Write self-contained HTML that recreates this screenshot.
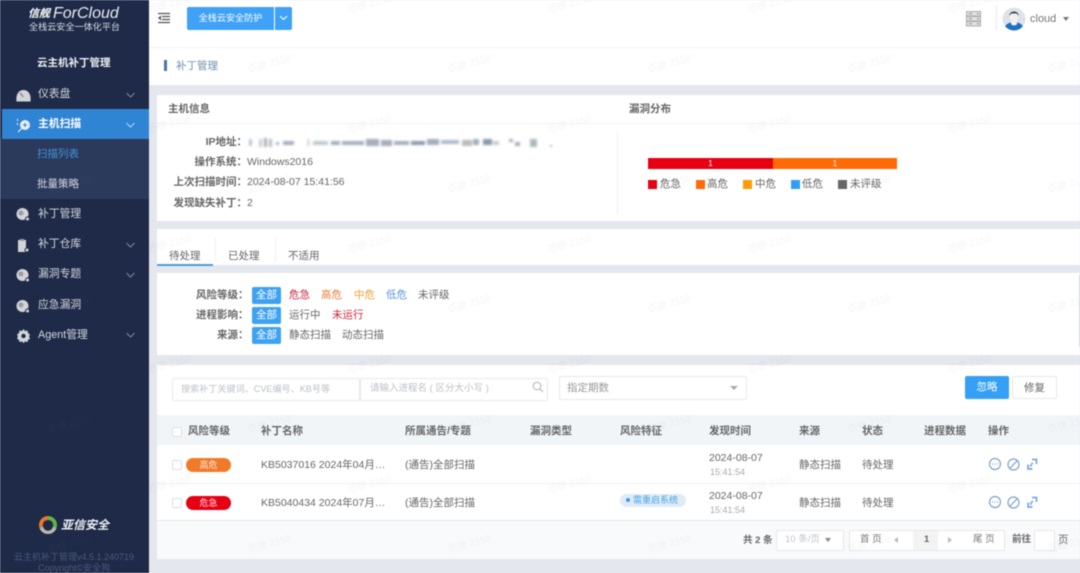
<!DOCTYPE html>
<html lang="zh"><head><meta charset="utf-8"><title>补丁管理</title>
<style>
html,body{margin:0;padding:0;width:1080px;height:573px;overflow:hidden;background:#e4e7ee}
#r{position:relative;width:1080px;height:573px;overflow:hidden;filter:blur(.45px);font-family:"Liberation Sans","Noto Sans CJK SC",sans-serif;font-size:10.5px;color:#666}
#r div,#r span,#r svg{position:absolute}
.t{line-height:14px;white-space:nowrap;margin-top:1px}
.b{font-weight:700;color:#666}
.w{background:#fff}
.m{color:#d5d9e2;font-size:10.8px;left:38px}
.r{text-align:right;width:76px;left:171px;color:#666;font-weight:700}
.th{color:#666;font-weight:700;top:423px}
.box{background:#fff;border:1px solid #e6e8ec;border-radius:2px;box-sizing:border-box}
.ph{color:#bcc0c8;font-size:9.5px}
.chip{background:#3ea2f2;color:#fff;left:252px;width:29px;height:17px;border-radius:2px;text-align:center;line-height:17px}
.cb{width:10px;height:10px;left:172px;background:#fff;border:1px solid #dcdfe6;border-radius:2px;box-sizing:border-box}
</style></head><body><div id="r">

<!-- top -->
<div class="w" style="left:149px;top:0;width:931px;height:47px"></div>
<div class="w" style="left:149px;top:48px;width:931px;height:37px"></div>
<div style="left:149px;top:47px;width:931px;height:1px;background:#f1f2f5"></div>
<svg style="left:157px;top:12px" width="14" height="12" viewBox="0 0 14 12"><path d="M1 1.500H13M5 4.500H13M5 7.500H13M1 10.500H13" stroke="#555" stroke-width="1.300" fill="none"/><path d="M4 3.500L1 6l3 2.500z" fill="#555"/></svg>
<div style="left:187px;top:7px;width:87px;height:23px;background:#3fa2f7;border-radius:2px 0 0 2px;color:#fff;text-align:center;line-height:23px;font-size:9.1px">全栈云安全防护</div>
<div style="left:275px;top:7px;width:17px;height:23px;background:#3fa2f7;border-radius:0 2px 2px 0"></div>
<svg style="left:279px;top:15px" width="9" height="6" viewBox="0 0 9 6"><path d="M1 1l3.500 3.500L8 1" stroke="#fff" fill="none"/></svg>
<svg style="left:966px;top:11px" width="15" height="16" viewBox="0 0 15 16"><path d="M.5.500h14v4.500H.5zM.5 5.500h14V10H.5zM.5 10.500h14V15H.5z" fill="#e3e3e3" stroke="#aaa"/><path d="M3 2.700h3M3 7.700h3M3 12.700h3M11 2.700h2M11 7.700h2M11 12.700h2" stroke="#888"/></svg>
<div style="left:996px;top:6px;width:1px;height:24px;background:#e8e8e8"></div>
<svg style="left:1002px;top:7px" width="24" height="24" viewBox="0 0 24 24"><defs><clipPath id="c"><circle cx="12" cy="12" r="11.500"/></clipPath></defs><circle cx="12" cy="12" r="11.500" fill="#dfe2e8"/><g clip-path="url(#c)"><path d="M2 24c0-6 4-8 7-8.500h6c3 .5 7 2.500 7 8.500z" fill="#1f70c4"/><path d="M9 13h6v4c-1 2-5 2-6 0z" fill="#f4f1ee"/><ellipse cx="12" cy="10" rx="4.200" ry="5.500" fill="#f4f0ec"/><path d="M7.500 9C7 3 17 3 16.500 9 15.500 6.500 14 6 12 6.500 10 6 8.500 6.500 7.500 9z" fill="#3a4250"/></g></svg>
<span class="t" style="left:1030px;top:11px;color:#777;font-size:11px">cloud</span>
<div style="left:1063px;top:17px;width:0;height:0;border:3px solid transparent;border-top:4px solid #777"></div>
<div style="left:164px;top:60px;width:3px;height:11px;background:#4a72a8"></div>
<span class="t" style="left:176px;top:58px;color:#6f8fae">补丁管理</span>

<!-- host card -->
<div class="w" style="left:157px;top:95px;width:923px;height:126px"></div>
<div style="left:157px;top:123px;width:923px;height:1px;background:#f3f4f6"></div>
<span class="t b" style="left:168px;top:101px">主机信息</span>
<span class="t b" style="left:629px;top:101px">漏洞分布</span>
<span class="t r" style="top:134px">IP地址：</span>
<span class="t r" style="top:154px">操作系统：</span>
<span class="t r" style="top:174px">上次扫描时间：</span>
<span class="t r" style="top:195px">发现缺失补丁：</span>
<svg style="left:247px;top:136px;filter:blur(1.1px)" width="315" height="14"><g fill="#a4aebd"><rect x="2" y="3" width="3" height="7" fill="#b9c4d8"/><rect x="12" y="3" width="3" height="8" fill="#ccc"/><rect x="17" y="2" width="3" height="9"/><rect x="22" y="3" width="3" height="8" fill="#bbb"/><rect x="29" y="6" width="3" height="3"/><rect x="36" y="5" width="11" height="4"/><rect x="60" y="3" width="3" height="7" fill="#ddd"/><rect x="66" y="5" width="15" height="4" fill="#bcc"/><rect x="84" y="5" width="9" height="4"/><rect x="95" y="5" width="22" height="4"/><rect x="119" y="3" width="13" height="7"/><rect x="134" y="4" width="11" height="6" fill="#aab"/><rect x="147" y="5" width="15" height="4"/><rect x="164" y="5" width="14" height="4" fill="#89a"/><rect x="180" y="3" width="12" height="6"/><rect x="194" y="4" width="18" height="4" fill="#abc"/><rect x="215" y="4" width="10" height="6" fill="#bbb"/><rect x="226" y="3" width="6" height="6"/><rect x="236" y="3" width="9" height="6" fill="#89a"/><rect x="246" y="5" width="6" height="4" fill="#ccc"/><rect x="262" y="3" width="4" height="3"/><rect x="268" y="6" width="5" height="4"/><rect x="283" y="3" width="7" height="8" fill="#abb"/><rect x="303" y="9" width="2" height="2"/></g></svg>
<span class="t" style="left:247px;top:154px">Windows2016</span>
<span class="t" style="left:247px;top:174px">2024-08-07 15:41:56</span>
<span class="t" style="left:247px;top:195px">2</span>
<div style="left:617px;top:132px;width:1px;height:82px;background:#f0f0f2"></div>
<div style="left:648px;top:158px;width:125px;height:11px;background:#e60012;color:#fff;text-align:center;line-height:11px;font-size:8px">1</div>
<div style="left:773px;top:158px;width:124px;height:11px;background:#ff6a06;color:#fff;text-align:center;line-height:11px;font-size:8px">1</div>
<div style="left:648px;top:180px;width:9px;height:9px;background:#e60012"></div><span class="t" style="left:660px;top:176px">危急</span>
<div style="left:696px;top:180px;width:9px;height:9px;background:#ff6a06"></div><span class="t" style="left:707px;top:176px">高危</span>
<div style="left:743px;top:180px;width:9px;height:9px;background:#ff9c07"></div><span class="t" style="left:755px;top:176px">中危</span>
<div style="left:791px;top:180px;width:9px;height:9px;background:#2f9ff5"></div><span class="t" style="left:802px;top:176px">低危</span>
<div style="left:838px;top:180px;width:9px;height:9px;background:#666"></div><span class="t" style="left:850px;top:176px">未评级</span>

<!-- tabs -->
<div class="w" style="left:157px;top:229px;width:923px;height:36px"></div>
<div style="left:157px;top:264px;width:56px;height:2px;background:#4a9fd8"></div>
<div style="left:215px;top:238px;width:1px;height:24px;background:#f0f0f2"></div>
<div style="left:275px;top:238px;width:1px;height:24px;background:#f0f0f2"></div>
<span class="t" style="left:169px;top:248px">待处理</span>
<span class="t" style="left:228px;top:248px">已处理</span>
<span class="t" style="left:288px;top:248px">不适用</span>

<!-- filters -->
<div class="w" style="left:157px;top:273px;width:923px;height:82px"></div>
<div style="left:1079px;top:275px;width:1px;height:72px;background:#d8dbe2"></div>
<span class="t b" style="left:196px;top:287px">风险等级：</span>
<span class="t b" style="left:196px;top:307px">进程影响：</span>
<span class="t b" style="left:217px;top:327px">来源：</span>
<div class="chip" style="top:287px">全部</div><div class="chip" style="top:307px">全部</div><div class="chip" style="top:327px">全部</div>
<span class="t" style="left:289px;top:287px;color:#c8243c">危急</span>
<span class="t" style="left:321px;top:287px;color:#ee7a33">高危</span>
<span class="t" style="left:354px;top:287px;color:#f0a030">中危</span>
<span class="t" style="left:386px;top:287px;color:#5a94e0">低危</span>
<span class="t" style="left:418px;top:287px">未评级</span>
<span class="t" style="left:289px;top:307px">运行中</span>
<span class="t" style="left:332px;top:307px;color:#c8243c">未运行</span>
<span class="t" style="left:289px;top:327px">静态扫描</span>
<span class="t" style="left:342px;top:327px">动态扫描</span>

<!-- table -->
<div class="w" style="left:157px;top:365px;width:923px;height:155px"></div>
<div class="box" style="left:172px;top:378px;width:188px;height:23px"></div>
<span class="t ph" style="left:181px;top:381px;font-size:9.1px">搜索补丁关键词、CVE编号、KB号等</span>
<div class="box" style="left:360px;top:378px;width:188px;height:23px"></div>
<span class="t ph" style="left:370px;top:381px">请输入进程名 ( 区分大小写 )</span>
<svg style="left:532px;top:381px" width="12" height="12" viewBox="0 0 12 12"><circle cx="5" cy="5" r="3.800" fill="none" stroke="#a8adb5"/><path d="M8 8l3 3" stroke="#a8adb5"/></svg>
<div class="box" style="left:559px;top:376px;width:188px;height:24px"></div>
<span class="t" style="left:567px;top:380px;color:#999">指定期数</span>
<div style="left:730px;top:386px;width:0;height:0;border:4px solid transparent;border-top:4px solid #aaa"></div>
<div style="left:965px;top:376px;width:44px;height:23px;background:#35a0f4;color:#fff;text-align:center;line-height:23px;border-radius:2px">忽略</div>
<div class="box" style="left:1012px;top:376px;width:45px;height:23px;color:#666;text-align:center;line-height:22px">修复</div>

<div style="left:157px;top:415px;width:923px;height:30px;background:#f2f5f8"></div>
<div class="cb" style="top:427px"></div>
<span class="t th" style="left:188px">风险等级</span>
<span class="t th" style="left:261px">补丁名称</span>
<span class="t th" style="left:405px">所属通告/专题</span>
<span class="t th" style="left:530px">漏洞类型</span>
<span class="t th" style="left:620px">风险特征</span>
<span class="t th" style="left:709px">发现时间</span>
<span class="t th" style="left:799px">来源</span>
<span class="t th" style="left:862px">状态</span>
<span class="t th" style="left:924px">进程数据</span>
<span class="t th" style="left:988px">操作</span>

<div style="left:157px;top:483px;width:923px;height:1px;background:#eef0f3"></div>
<div class="cb" style="top:460px"></div>
<div style="left:186px;top:458px;width:45px;height:14px;border-radius:7px;background:#f07a2a;color:#fdeee2;text-align:center;line-height:14px;font-size:9px">高危</div>
<span class="t" style="left:261px;top:457px">KB5037016 2024年04月…</span>
<span class="t" style="left:405px;top:457px">(通告)全部扫描</span>
<span class="t" style="left:709px;top:450px">2024-08-07</span>
<span class="t" style="left:710px;top:464px;font-size:9px;color:#aaa">15:41:54</span>
<span class="t" style="left:799px;top:457px">静态扫描</span>
<span class="t" style="left:862px;top:457px">待处理</span>

<div class="cb" style="top:498px"></div>
<div style="left:186px;top:496px;width:45px;height:14px;border-radius:7px;background:#e60012;color:#fde;text-align:center;line-height:14px;font-size:9px">危急</div>
<span class="t" style="left:261px;top:495px">KB5040434 2024年07月…</span>
<span class="t" style="left:405px;top:495px">(通告)全部扫描</span>
<div style="left:620px;top:494px;width:66px;height:13px;border-radius:7px;background:#e0ebf5"></div>
<div style="left:626px;top:498px;width:4px;height:4px;border-radius:50%;background:#2f9ff5"></div>
<span class="t" style="left:633px;top:492px;color:#45a5ea;font-size:9px">需重启系统</span>
<span class="t" style="left:709px;top:488px">2024-08-07</span>
<span class="t" style="left:710px;top:502px;font-size:9px;color:#aaa">15:41:54</span>
<span class="t" style="left:799px;top:495px">静态扫描</span>
<span class="t" style="left:862px;top:495px">待处理</span>

<svg style="left:988px;top:457px" width="52" height="14" viewBox="0 0 52 14"><g fill="none" stroke="#7fa3c8" stroke-width="1.200"><circle cx="7" cy="7" r="5.500"/><path d="M4 7h1M6.500 7h1M9 7h1"/><circle cx="25.500" cy="7.500" r="5.500"/><path d="M21.700 11.300l7.600-7.600"/></g><g fill="none" stroke="#7aa8dc" stroke-width="1.700"><path d="M44 2.500h4.500V7M45 6l-2 1.500M40 7.500v4.500h4.500M43.500 8l-1.500 1.500"/></g></svg>
<svg style="left:988px;top:495px" width="52" height="14" viewBox="0 0 52 14"><g fill="none" stroke="#7fa3c8" stroke-width="1.200"><circle cx="7" cy="7" r="5.500"/><path d="M4 7h1M6.500 7h1M9 7h1"/><circle cx="25.500" cy="7.500" r="5.500"/><path d="M21.700 11.300l7.600-7.600"/></g><g fill="none" stroke="#7aa8dc" stroke-width="1.700"><path d="M44 2.500h4.500V7M45 6l-2 1.500M40 7.500v4.500h4.500M43.500 8l-1.500 1.500"/></g></svg>

<!-- pagination -->
<div style="left:157px;top:520px;width:923px;height:1px;background:#e6e8ec"></div>
<div style="left:157px;top:521px;width:923px;height:38px;background:#f9fafb"></div>
<span class="t b" style="left:743px;top:533px;font-size:9.5px">共 2 条</span>
<div class="box" style="left:776px;top:530px;width:68px;height:21px"></div>
<span class="t" style="left:785px;top:532px;color:#c0c4cc;font-size:9.5px">10 条/页</span>
<div style="left:825px;top:538px;width:0;height:0;border:3px solid transparent;border-top:4px solid #888"></div>
<div class="box" style="left:849px;top:530px;width:156px;height:21px"></div>
<div style="left:913px;top:531px;width:25px;height:19px;background:#f3f3f3"></div>
<span class="t" style="left:860px;top:532px;color:#777;font-size:9.5px">首 页</span>
<div style="left:894px;top:537px;width:0;height:0;border:3.5px solid transparent;border-right:4px solid #bbb;border-left:0"></div>
<span class="t b" style="left:924px;top:532px;font-size:9.5px">1</span>
<div style="left:948px;top:537px;width:0;height:0;border:3.5px solid transparent;border-left:4px solid #bbb;border-right:0"></div>
<span class="t" style="left:973px;top:532px;color:#777;font-size:9.5px">尾 页</span>
<span class="t b" style="left:1012px;top:532px;font-size:9.5px">前往</span>
<div class="box" style="left:1034px;top:530px;width:21px;height:21px"></div>
<span class="t" style="left:1058px;top:532px">页</span>

<!-- sidebar -->
<div style="left:0;top:0;width:149px;height:573px;background:#1e2a47"></div>
<div style="left:0;top:139px;width:149px;height:60px;background:#2b3a5b"></div>
<div style="left:2px;top:109px;width:147px;height:30px;background:#2f84d4"></div>
<span class="t" style="left:28px;top:6px;color:#fff;font-size:11px;font-weight:700;font-style:italic">信舰</span>
<span class="t" style="left:53px;top:4px;color:#e8ebf0;font-size:16px;line-height:18px;font-style:italic">ForCloud</span>
<span class="t" style="left:29px;top:19px;color:#d8dce5;font-size:9.1px">全栈云安全一体化平台</span>
<span class="t" style="left:37px;top:55px;color:#eef0f4;font-weight:700">云主机补丁管理</span>

<svg style="left:16px;top:89px" width="15" height="13" viewBox="0 0 15 13"><path d="M.5 12.500C-.5 5 3 1 7.500 1S15.500 5 14.500 12.500z" fill="#d2d4d8"/><path d="M4 4l3.500 4" stroke="#777"/></svg>
<span class="t m" style="top:86px">仪表盘</span>
<svg style="left:16px;top:117px" width="15" height="16" viewBox="0 0 15 16"><circle cx="9" cy="8" r="5" fill="#e8ecf2"/><path d="M5.500 11.500L2 15" stroke="#e8ecf2" stroke-width="1.200"/><path d="M9 6v4M7 8h4" stroke="#2f84d4"/><path d="M1.500 2v2M1.500 6v2" stroke="#e8ecf2"/></svg>
<span class="t m" style="top:116px;color:#fff;font-weight:700">主机扫描</span>
<span class="t" style="left:37px;top:146px;color:#3f93dc">扫描列表</span>
<span class="t" style="left:37px;top:176px;color:#d5d9e2">批量策略</span>
<span class="t m" style="top:206px">补丁管理</span>
<span class="t m" style="top:236px">补丁仓库</span>
<span class="t m" style="top:266px">漏洞专题</span>
<span class="t m" style="top:297px">应急漏洞</span>
<span class="t m" style="top:327px">Agent管理</span>
<svg style="left:16px;top:207px" width="14" height="15" viewBox="0 0 14 15"><circle cx="6.500" cy="7" r="6" fill="#d2d4d8"/><circle cx="5" cy="6" r="2.500" fill="#9a9da5"/><circle cx="11.500" cy="12" r="2" fill="#d2d4d8" stroke="#1e2a47"/></svg>
<svg style="left:16px;top:238px" width="14" height="15" viewBox="0 0 14 15"><path d="M2 2h8v12H2z" fill="#d2d4d8"/><path d="M4 1h4v2H4z" fill="#9a9da5"/><circle cx="11" cy="12" r="2" fill="#d2d4d8" stroke="#1e2a47"/></svg>
<svg style="left:16px;top:268px" width="14" height="15" viewBox="0 0 14 15"><circle cx="6.500" cy="7" r="6" fill="#d2d4d8"/><circle cx="5" cy="6" r="2.500" fill="#9a9da5"/><circle cx="11.500" cy="12" r="2" fill="#d2d4d8" stroke="#1e2a47"/></svg>
<svg style="left:16px;top:299px" width="14" height="15" viewBox="0 0 14 15"><circle cx="6.500" cy="7" r="6" fill="#d2d4d8"/><circle cx="5" cy="6" r="2.500" fill="#9a9da5"/><circle cx="11.500" cy="12" r="2" fill="#d2d4d8" stroke="#1e2a47"/></svg>
<svg style="left:17px;top:329px" width="13" height="14" viewBox="0 0 13 14"><path d="M6.500 0l1.500 2 2.500-.5.500 2.500 2 1.500-1 2 1 2-2 1.500-.5 2-2.500-.5-1.500 1.500-1.500-1.500-2.500.5-.5-2-2-1.500 1-2-1-2 2-1.500.5-2.500L5 2z" fill="#d2d4d8"/><circle cx="6.500" cy="7" r="2.200" fill="#1e2a47"/></svg>
<svg style="left:126px;top:92px" width="9" height="6" viewBox="0 0 9 6"><path d="M.5 1l4 4 4-4" stroke="#7d879c" fill="none"/></svg>
<svg style="left:126px;top:122px" width="9" height="6" viewBox="0 0 9 6"><path d="M.5 1l4 4 4-4" stroke="#b8d4ee" fill="none"/></svg>
<svg style="left:126px;top:242px" width="9" height="6" viewBox="0 0 9 6"><path d="M.5 1l4 4 4-4" stroke="#7d879c" fill="none"/></svg>
<svg style="left:126px;top:272px" width="9" height="6" viewBox="0 0 9 6"><path d="M.5 1l4 4 4-4" stroke="#7d879c" fill="none"/></svg>
<svg style="left:126px;top:332px" width="9" height="6" viewBox="0 0 9 6"><path d="M.5 1l4 4 4-4" stroke="#7d879c" fill="none"/></svg>
<svg style="left:38px;top:515px" width="20" height="20" viewBox="0 0 20 20"><path d="M10 1a9 9 0 0 0-8.500 12l3.600-1.300A5 5 0 0 1 10 5z" fill="#e8792b"/><path d="M10 1a9 9 0 0 1 8.500 12l-3.600-1.300A5 5 0 0 0 10 5z" fill="#62b446"/><path d="M1.500 13a9 9 0 0 0 17 0l-3.600-1.300a5 5 0 0 1-9.800 0z" fill="#b8b8b0"/><path d="M10 7l3 5H7z" fill="#1e2a47"/></svg>
<span class="t" style="left:61px;top:517px;color:#eef0f4;font-size:12px;font-weight:700;font-style:italic">亚信安全</span>
<span class="t" style="left:14px;top:549px;color:#4a587c;font-size:9px">云主机补丁管理v4.5.1.240719</span>
<span class="t" style="left:38px;top:560px;color:#4a587c;font-size:9px">Copyright©安全狗</span>

<!-- watermark -->
<svg style="left:0;top:0" width="1080" height="573"><defs><pattern id="wm" patternUnits="userSpaceOnUse" x="120" y="-23" width="200" height="120"><text x="50" y="30" text-anchor="middle" transform="rotate(-15 50 30)" font-size="10" fill="#778" fill-opacity=".07" font-family="Liberation Sans,Noto Sans CJK SC,sans-serif">范德 2158</text><text x="150" y="90" text-anchor="middle" transform="rotate(-15 150 90)" font-size="10" fill="#778" fill-opacity=".07" font-family="Liberation Sans,Noto Sans CJK SC,sans-serif">范德 2158</text></pattern></defs><rect width="1080" height="573" fill="url(#wm)"/></svg>
</div></body></html>
